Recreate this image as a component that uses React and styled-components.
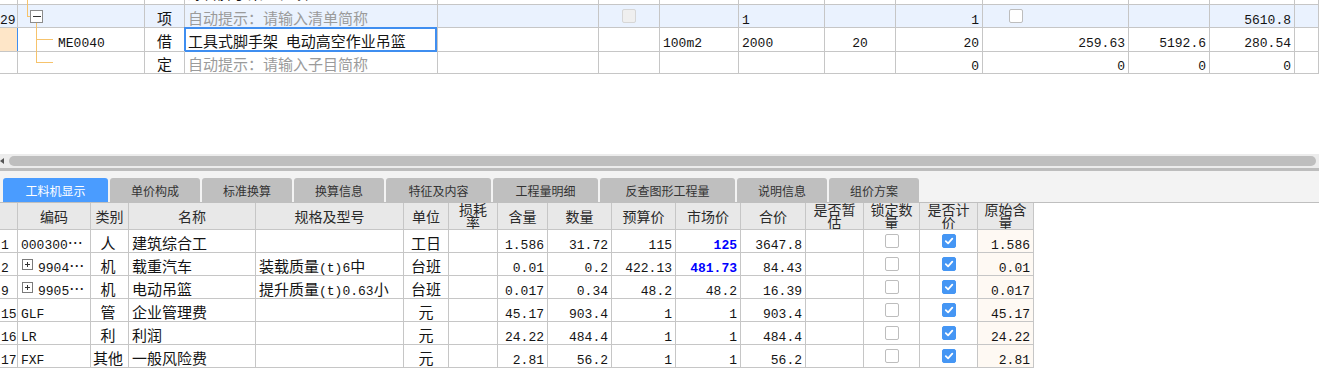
import React from 'react';
import styled, { createGlobalStyle } from 'styled-components';

const CJK = '"Noto Sans CJK SC", "Noto Sans", sans-serif';
const MONO = '"Liberation Mono", "Noto Sans CJK SC", monospace';
const LINE = '#c6c6c6';
const TREE = '#f6c36c';

const GlobalStyle = createGlobalStyle`
  html, body { margin: 0; padding: 0; background: #fff; }
  body { width: 1319px; height: 384px; overflow: hidden; font-family: ${CJK}; }
`;

const Page = styled.div`
  width: 1319px;
  height: 384px;
  display: flex;
  flex-direction: column;
  overflow: hidden;
`;

// ---------- top grid (清单/子目) ----------
const TOP_COLS = '18px 127px 40px 253px 161px 61px 79px 86px 71px 87px 146px 81px 85px 1fr';
const BOTTOM_COLS = '18px 73px 38px 127px 148px 45px 49px 50px 64px 64px 65px 65px 58px 56px 58px 56px';

const TopArea = styled.div`
  height: 154px;
  overflow: hidden;
  flex: none;
`;

const GridRow = styled.div`
  display: grid;
  grid-template-columns: ${p => p.$cols};
  height: ${p => p.$h || 23}px;
  width: ${p => (p.$w ? p.$w + 'px' : 'auto')};
  margin-top: ${p => p.$offset || 0}px;
  background: ${p => p.$bg || 'transparent'};
`;

const justify = { left: 'flex-start', center: 'center', right: 'flex-end' };

const Cell = styled.div`
  box-sizing: border-box;
  position: relative;
  display: flex;
  align-items: center;
  justify-content: ${p => justify[p.$align || 'left']};
  padding: 2px 3px 0 ${p => (p.$pl != null ? p.$pl : 3)}px;
  border-right: 1px solid ${p => p.$edge || LINE};
  border-bottom: 1px solid ${LINE};
  background: ${p => p.$bg || 'transparent'};
  overflow: ${p => (p.$open ? 'visible' : 'hidden')};
  white-space: pre;
  font-family: ${CJK};
  font-size: 15px;
  font-weight: ${p => (p.$hot ? 700 : 400)};
  color: ${p => (p.$hot ? '#0000ff' : p.$muted ? '#9b9b9b' : '#141414')};

  ${p => p.$editing && `
    &::after {
      content: '';
      position: absolute;
      top: -1px; left: -1px; right: 0; bottom: -1px;
      border: 2px solid #3f8ef0;
      pointer-events: none;
    }
  `}
`;

const Latin = styled.span`
  font-family: ${MONO};
  font-size: 13px;
`;

const Peek = styled.span`
  margin-top: -4px;
`;

const Mixed = ({ text }) => (
  <span>
    {String(text)
      .split(/([\x20-\x7e]+)/)
      .filter(Boolean)
      .map((part, i) =>
        /^[\x20-\x7e]+$/.test(part) ? <Latin key={i}>{part}</Latin> : <span key={i}>{part}</span>
      )}
  </span>
);

const TreeSvg = styled.svg`
  position: absolute;
  left: 0;
  top: 0;
  shape-rendering: crispEdges;
`;

function Tree({ kind }) {
  return (
    <TreeSvg width="40" height="23" viewBox="0 0 40 23">
      {kind === 'trunk' && <line x1="9.5" y1="0" x2="9.5" y2="23" stroke={TREE} />}
      {kind === 'parent' && (
        <>
          <line x1="9.5" y1="0" x2="9.5" y2="11.5" stroke={TREE} />
          <line x1="9.5" y1="11.5" x2="12" y2="11.5" stroke={TREE} />
          <rect x="12.5" y="5.5" width="12" height="12" fill="#fff" stroke="#8c8c8c" />
          <line x1="15" y1="11.5" x2="22.5" y2="11.5" stroke="#333" />
          <line x1="18.5" y1="18" x2="18.5" y2="23" stroke={TREE} />
        </>
      )}
      {(kind === 'child' || kind === 'last') && (
        <>
          <line x1="18.5" y1="0" x2="18.5" y2={kind === 'child' ? 23 : 11.5} stroke={TREE} />
          <line x1="18.5" y1="11.5" x2="35" y2="11.5" stroke={TREE} />
        </>
      )}
    </TreeSvg>
  );
}

const Box = styled.span`
  box-sizing: border-box;
  display: inline-flex;
  align-items: center;
  justify-content: center;
  width: 14px;
  height: 14px;
  border-radius: 2px;
  margin-top: -2px;
  margin-left: ${p => p.$ml || 0}px;
  border: 1px solid ${p => (p.$on ? '#4596f4' : p.$disabled ? '#d6d6d6' : '#bdbdbd')};
  background: ${p => (p.$on ? '#4596f4' : p.$disabled ? '#efefef' : '#fff')};
`;

function CheckBox({ on, disabled, ml }) {
  return (
    <Box $on={on} $disabled={disabled} $ml={ml}>
      {on && (
        <svg width="10" height="10" viewBox="0 0 10 10">
          <path d="M1.8 5.2 L4.1 7.4 L8.3 2.6" fill="none" stroke="#fff" strokeWidth="1.8" strokeLinecap="round" strokeLinejoin="round" />
        </svg>
      )}
    </Box>
  );
}

const CodeText = styled.span`
  margin-left: ${p => p.$indent || 0}px;
`;

// ---------- scroll + tabs ----------
const HScroll = styled.div`
  flex: none;
  height: 14px;
  display: flex;
  align-items: center;
  background: #ececec;
  padding-right: 3px;
`;

const ArrowLeft = styled.span`
  flex: none;
  width: 9px;
  display: flex;
  align-items: center;
  &::before {
    content: '';
    border-top: 3px solid transparent;
    border-bottom: 3px solid transparent;
    border-right: 4px solid #555;
  }
`;

const Thumb = styled.div`
  flex: 1;
  height: 10px;
  border-radius: 5px;
  background: #bebebe;
`;

const Splitter = styled.div`
  flex: none;
  height: 3px;
  background: #bdbdbd;
`;

const TabBar = styled.div`
  flex: none;
  height: 31px;
  display: flex;
  align-items: flex-end;
  gap: 2px;
  padding-left: 3px;
  background: #f3f3f3;
  border-bottom: 1px solid #bfbfbf;
`;

const Tab = styled.div`
  width: ${p => p.$w}px;
  height: 24px;
  display: flex;
  align-items: center;
  justify-content: center;
  border-radius: 3px 3px 0 0;
  background: ${p => (p.$active ? '#4a9cff' : '#bfbfbf')};
  color: ${p => (p.$active ? '#fff' : '#333')};
  font-family: ${CJK};
  font-size: 12px;
`;

// ---------- bottom grid (工料机) ----------
const HeadCell = styled.div`
  box-sizing: border-box;
  display: flex;
  flex-direction: column;
  align-items: center;
  justify-content: center;
  overflow: hidden;
  background: #e8e8e8;
  border-right: 1px solid ${LINE};
  border-bottom: 1px solid ${LINE};
  font-family: ${CJK};
  font-size: 14px;
  line-height: ${p => (p.$two ? 13 : 16)}px;
  color: #2a2a2a;
  white-space: nowrap;
`;

const PlusBox = styled.svg`
  flex: none;
  margin: -1px 5px 0 1px;
  shape-rendering: crispEdges;
`;

const tabs = [
  { label: '工料机显示', w: 105, active: true },
  { label: '单价构成', w: 90 },
  { label: '标准换算', w: 90 },
  { label: '换算信息', w: 90 },
  { label: '特征及内容', w: 105 },
  { label: '工程量明细', w: 105 },
  { label: '反查图形工程量', w: 135 },
  { label: '说明信息', w: 90 },
  { label: '组价方案', w: 90 },
];

const headers = [
  [''], ['编码'], ['类别'], ['名称'], ['规格及型号'], ['单位'], ['损耗', '率'], ['含量'], ['数量'],
  ['预算价'], ['市场价'], ['合价'], ['是否暂', '估'], ['锁定数', '量'], ['是否计', '价'], ['原始含', '量'],
];

const items = [
  { no: '1', code: '000300…', type: '人', name: '建筑综合工', spec: '', unit: '工日', qty: '1.586', amount: '31.72', budget: '115', market: '125', hot: true, total: '3647.8', orig: '1.586' },
  { no: '2', code: '9904…', plus: true, type: '机', name: '载重汽车', spec: '装载质量(t)6中', unit: '台班', qty: '0.01', amount: '0.2', budget: '422.13', market: '481.73', hot: true, total: '84.43', orig: '0.01' },
  { no: '9', code: '9905…', plus: true, type: '机', name: '电动吊篮', spec: '提升质量(t)0.63小', unit: '台班', qty: '0.017', amount: '0.34', budget: '48.2', market: '48.2', total: '16.39', orig: '0.017' },
  { no: '15', code: 'GLF', type: '管', name: '企业管理费', spec: '', unit: '元', qty: '45.17', amount: '903.4', budget: '1', market: '1', total: '903.4', orig: '45.17' },
  { no: '16', code: 'LR', type: '利', name: '利润', spec: '', unit: '元', qty: '24.22', amount: '484.4', budget: '1', market: '1', total: '484.4', orig: '24.22' },
  { no: '17', code: 'FXF', type: '其他', name: '一般风险费', spec: '', unit: '元', qty: '2.81', amount: '56.2', budget: '1', market: '1', total: '56.2', orig: '2.81' },
];

function TopRows() {
  const blank = n => Array.from({ length: n }, (_, i) => <Cell key={'b' + i} />);
  return (
    <TopArea>
      <GridRow $cols={TOP_COLS} $offset={-18}>
        <Cell />
        <Cell $open><Tree kind="trunk" /></Cell>
        <Cell />
        <Cell><Peek>综合脚手架工程项</Peek></Cell>
        {blank(10)}
      </GridRow>

      <GridRow $cols={TOP_COLS} $bg="#eaf2fe">
        <Cell $pl={0}><Mixed text="29" /></Cell>
        <Cell $open><Tree kind="parent" /></Cell>
        <Cell $align="center">项</Cell>
        <Cell $muted>自动提示：请输入清单简称</Cell>
        <Cell />
        <Cell $align="center"><CheckBox disabled /></Cell>
        <Cell />
        <Cell><Mixed text="1" /></Cell>
        <Cell />
        <Cell $align="right"><Mixed text="1" /></Cell>
        <Cell><CheckBox ml={23} /></Cell>
        <Cell />
        <Cell $align="right"><Mixed text="5610.8" /></Cell>
        <Cell />
      </GridRow>

      <GridRow $cols={TOP_COLS}>
        <Cell $bg="#fee6c8" $edge="#3f8ef0" />
        <Cell $open><Tree kind="child" /><CodeText $indent={37}><Mixed text="ME0040" /></CodeText></Cell>
        <Cell $align="center">借</Cell>
        <Cell $open $editing><Mixed text="工具式脚手架 电动高空作业吊篮" /></Cell>
        <Cell />
        <Cell />
        <Cell><Mixed text="100m2" /></Cell>
        <Cell><Mixed text="2000" /></Cell>
        <Cell $align="center"><Mixed text="20" /></Cell>
        <Cell $align="right"><Mixed text="20" /></Cell>
        <Cell $align="right"><Mixed text="259.63" /></Cell>
        <Cell $align="right"><Mixed text="5192.6" /></Cell>
        <Cell $align="right"><Mixed text="280.54" /></Cell>
        <Cell />
      </GridRow>

      <GridRow $cols={TOP_COLS}>
        <Cell />
        <Cell $open><Tree kind="last" /></Cell>
        <Cell $align="center">定</Cell>
        <Cell $muted>自动提示：请输入子目简称</Cell>
        {blank(5)}
        <Cell $align="right"><Mixed text="0" /></Cell>
        <Cell $align="right"><Mixed text="0" /></Cell>
        <Cell $align="right"><Mixed text="0" /></Cell>
        <Cell $align="right"><Mixed text="0" /></Cell>
        <Cell />
      </GridRow>
    </TopArea>
  );
}

function ResourceTable() {
  return (
    <div>
      <GridRow $cols={BOTTOM_COLS} $h={27} $w={1034}>
        {headers.map((lines, i) => (
          <HeadCell key={i} $two={lines.length > 1}>
            {lines.map(l => <span key={l}>{l}</span>)}
          </HeadCell>
        ))}
      </GridRow>
      {items.map(it => (
        <GridRow key={it.no} $cols={BOTTOM_COLS} $w={1034}>
          <Cell $pl={1}><Mixed text={it.no} /></Cell>
          <Cell>
            {it.plus && (
              <PlusBox width="11" height="11" viewBox="0 0 11 11">
                <rect x="0.5" y="0.5" width="10" height="10" fill="#fff" stroke="#7a7a7a" />
                <line x1="3" y1="5.5" x2="8" y2="5.5" stroke="#333" />
                <line x1="5.5" y1="3" x2="5.5" y2="8" stroke="#333" />
              </PlusBox>
            )}
            <Mixed text={it.code} />
          </Cell>
          <Cell $align="center" $pl={0}>{it.type}</Cell>
          <Cell>{it.name}</Cell>
          <Cell><Mixed text={it.spec} /></Cell>
          <Cell $align="center">{it.unit}</Cell>
          <Cell />
          <Cell $align="right"><Mixed text={it.qty} /></Cell>
          <Cell $align="right"><Mixed text={it.amount} /></Cell>
          <Cell $align="right"><Mixed text={it.budget} /></Cell>
          <Cell $align="right" $hot={it.hot}><Mixed text={it.market} /></Cell>
          <Cell $align="right"><Mixed text={it.total} /></Cell>
          <Cell />
          <Cell $align="center"><CheckBox /></Cell>
          <Cell $align="center"><CheckBox on /></Cell>
          <Cell $align="right" $bg="#fef9f3"><Mixed text={it.orig} /></Cell>
        </GridRow>
      ))}
    </div>
  );
}

export default function App() {
  return (
    <Page>
      <GlobalStyle />
      <TopRows />
      <HScroll>
        <ArrowLeft />
        <Thumb />
      </HScroll>
      <Splitter />
      <TabBar>
        {tabs.map(t => (
          <Tab key={t.label} $w={t.w} $active={t.active}>{t.label}</Tab>
        ))}
      </TabBar>
      <ResourceTable />
    </Page>
  );
}
